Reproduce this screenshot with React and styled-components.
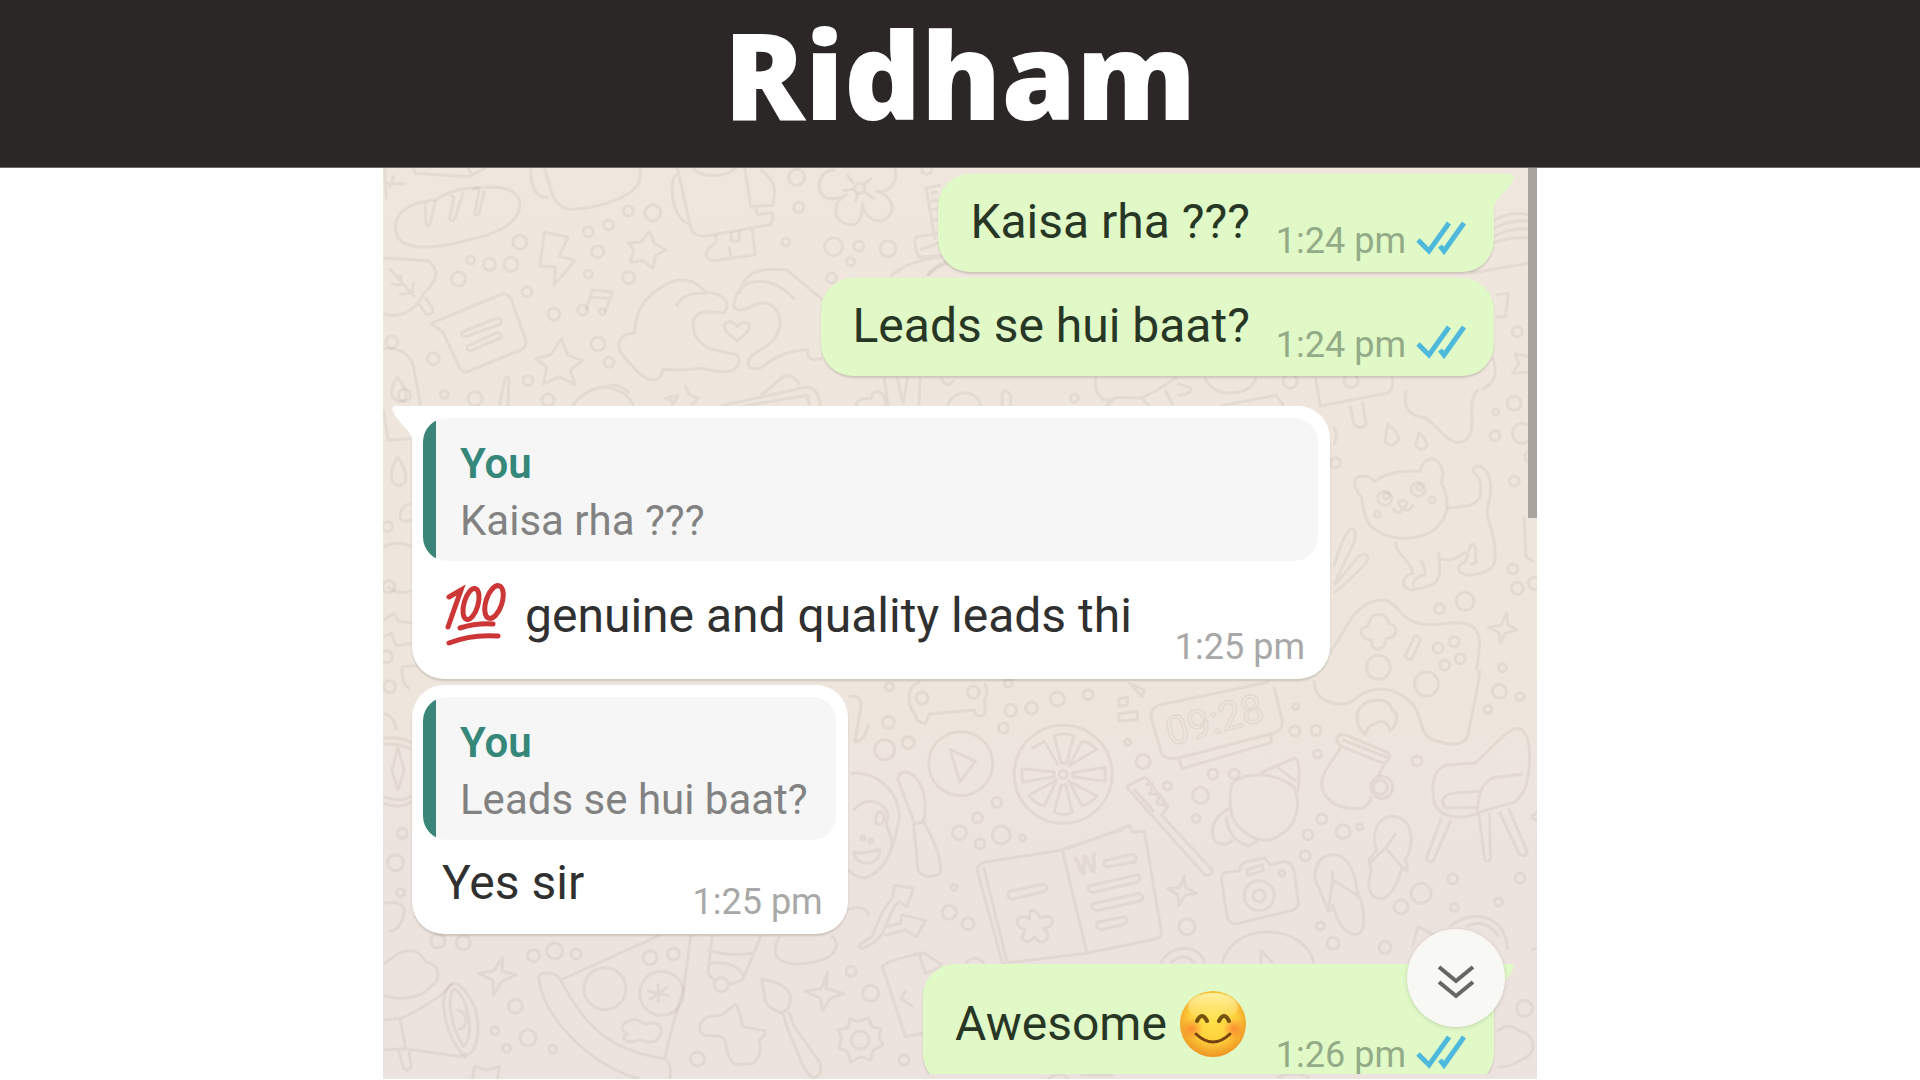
import styled, { createGlobalStyle } from "styled-components";

const messages = [
    { id: 1, mine: true, tail: true, text: "Kaisa rha ???", time: "1:24 pm" },
    { id: 2, mine: true, text: "Leads se hui baat?", time: "1:24 pm" },
    { id: 3, tail: true, quote: "Kaisa rha ???", emojiBefore: "hundred", text: "genuine and quality leads thi", time: "1:25 pm" },
    { id: 4, quote: "Leads se hui baat?", text: "Yes sir", time: "1:25 pm" },
    { id: 5, mine: true, tail: true, text: "Awesome", emojiAfter: "smile", time: "1:26 pm" }
];

export default function App() {
    return (
        <Page>
            <GlobalStyle />
            <Header>
                <Title>Ridham</Title>
            </Header>
            <Chat>
                <Wallpaper />
                <Messages>
                    {messages.map(message => <Message key={message.id} {...message} />)}
                </Messages>
                <ScrollThumb />
                <ScrollButton type="button" aria-label="Scroll to latest message">
                    <svg width="40" height="46" viewBox="0 0 40 46" fill="none" stroke="#666" strokeWidth="4">
                        <path d="M3 12L20 26L37 12M3 27L20 41L37 27" />
                    </svg>
                </ScrollButton>
            </Chat>
        </Page>
    );
}

function Message({ mine, tail, quote, emojiBefore, emojiAfter, text, time }) {
    return (
        <Bubble $mine={mine} $tail={tail}>
            {tail && <Tail mine={mine} />}
            {quote && (
                <Quote>
                    <QuoteAuthor>You</QuoteAuthor>
                    <QuoteText>{quote}</QuoteText>
                </Quote>
            )}
            <Body $mine={mine} $quoted={Boolean(quote)}>
                <Text $mine={mine}>
                    {emojiBefore && <Emoji name={emojiBefore} />}
                    <span>{text}</span>
                    {emojiAfter && <Emoji name={emojiAfter} />}
                </Text>
                <Meta $mine={mine}>
                    <time>{time}</time>
                    {mine && <Ticks />}
                </Meta>
            </Body>
        </Bubble>
    );
}

function Tail({ mine }) {
    return (
        <TailSvg $mine={mine} width="24" height="34" viewBox="0 0 24 34" aria-hidden="true">
            <path
                d="M0 0H20Q25 0 23 5L21 10L7 26Q4 30 4 34H0Z"
                transform={mine ? undefined : "matrix(-1 0 0 1 24 0)"}
                fill={mine ? "#e0f9c7" : "#fff"}
            />
        </TailSvg>
    );
}

function Ticks() {
    return (
        <svg width="50" height="42" viewBox="0 0 50 42" fill="none" stroke="#4fb9dc" strokeWidth="5" role="img" aria-label="Read">
            <path d="M2 20L13 31L33 3M24 26L28 31L48 3" />
        </svg>
    );
}

function Emoji({ name }) {
    if (name === "hundred") {
        return (
            <EmojiSvg viewBox="0 0 68 68" fill="none" stroke="#cc3636" strokeWidth="5" strokeLinecap="round" role="img" aria-label="100 points">
                <path d="M7 15L19 8L6 45" />
                <ellipse cx="29" cy="22" rx="7" ry="16" transform="rotate(16 29 22)" />
                <ellipse cx="52" cy="20" rx="8" ry="17" transform="rotate(18 52 20)" />
                <path d="M18 46Q34 41 51 42M7 61Q29 52 56 54" />
            </EmojiSvg>
        );
    }

    return (
        <EmojiSvg viewBox="0 0 68 68" fill="none" role="img" aria-label="Smiling face">
            <defs>
                <radialGradient id="face" cx="50%" cy="42%" r="58%">
                    <stop offset="0" stopColor="#ffe24a" />
                    <stop offset="0.6" stopColor="#fdd03c" />
                    <stop offset="1" stopColor="#ee9423" />
                </radialGradient>
                <linearGradient id="shine" x1="0" y1="0" x2="0" y2="1">
                    <stop offset="0" stopColor="#fff3a6" stopOpacity="0.95" />
                    <stop offset="1" stopColor="#fff3a6" stopOpacity="0" />
                </linearGradient>
                <radialGradient id="cheek">
                    <stop offset="0" stopColor="#f9762e" stopOpacity="0.75" />
                    <stop offset="1" stopColor="#f9762e" stopOpacity="0" />
                </radialGradient>
            </defs>
            <circle cx="34" cy="34" r="33" fill="url(#face)" />
            <ellipse cx="34" cy="17" rx="25" ry="14" fill="url(#shine)" />
            <circle cx="13" cy="39" r="11" fill="url(#cheek)" />
            <circle cx="55" cy="39" r="11" fill="url(#cheek)" />
            <path d="M18 31Q23 21 28 31M40 31Q45 21 50 31" stroke="#76520f" strokeWidth="4" strokeLinecap="round" />
            <path d="M17 44Q34 60 51 44" stroke="#76420f" strokeWidth="3" strokeLinecap="round" />
        </EmojiSvg>
    );
}

// One patch of the wallpaper: doodles in its own units, dots as [x, y, radius]
function Patch({ x, y, sx, dots, children }) {
    const sy = 1 / 3;
    return (
        <>
            <g transform={`translate(${x} ${y}) scale(${sx} ${sy})`}>{children}</g>
            {dots.map(([cx, cy, r]) => (
                <circle key={`${cx}-${cy}-${r}`} cx={x + cx * sx} cy={y + cy * sy} r={r} />
            ))}
        </>
    );
}

function Wallpaper() {
    return (
        <WallpaperSvg viewBox="0 0 1154 911" preserveAspectRatio="xMidYMin slice" aria-hidden="true">
            <Patch x={-3} y={-8} sx={0.37} dots={[
                [378, 247, 7], [296, 313, 6], [354, 313, 7], [245, 300, 4], [212, 357, 7], [397, 395, 5],
                [563, 215, 5], [618, 195, 5], [671, 153, 5], [737, 158, 8], [588, 275, 6], [563, 342, 4],
                [672, 353, 6], [470, 462, 6], [589, 552, 7], [619, 607, 5], [144, 596, 6], [400, 662, 5],
                [174, 703, 4], [257, 716, 7], [454, 720, 6], [1126, 52, 8], [1132, 142, 5], [1097, 246, 4],
                [1226, 260, 9], [1294, 258, 5], [1373, 266, 8], [1272, 305, 4], [1220, 354, 5], [1478, 28, 5],
                [1296, 85, 5], [32, 546, 6], [548, 450, 5], [600, 455, 3]
            ]}>
                <path d="M90 24L96 40L240 50L285 24M238 24L250 48M14 24Q14 110 20 116M16 70L68 72M24 84L38 46" />
                <path d="M42 200C42 140 110 124 150 120C190 88 250 80 300 82C360 80 380 110 378 140C370 200 300 225 240 240C170 260 40 290 42 200Z" />
                <path d="M122 128L124 190Q126 202 134 196L150 122M190 108Q204 108 198 120L188 178Q196 188 202 176L226 96M250 90Q266 78 268 92L256 160Q262 172 268 160L282 92" />
                <path d="M408 24C406 70 416 116 456 112M444 24L466 104Q484 152 530 148C600 140 690 110 702 60L704 24" />
                <path d="M806 40C776 50 788 176 832 190M804 24L840 204Q846 230 880 228L1054 194Q1062 186 1062 160M1028 28C1056 50 1070 80 1066 104L1062 136L1002 140L986 24M1014 140L1020 164L1062 158M846 24C870 54 930 54 962 24" />
                <path d="M906 224C916 256 896 252 888 266Q870 300 904 302L1014 284L1006 208M950 216L948 244L972 242L970 212M944 258L948 290" />
                <path d="M1230 30C1186 30 1178 80 1196 104C1214 128 1256 110 1260 104C1220 130 1224 180 1260 192C1296 204 1304 168 1304 130C1310 180 1350 194 1372 172C1396 146 1382 106 1342 94C1388 102 1400 50 1390 24M1280 70L1262 44M1308 74L1328 54M1280 88L1250 92M1292 98L1284 128M1310 96L1336 116" />
                <path d="M444 216L508 232L484 288L526 302L470 376L474 322L432 318Z" />
                <path d="M728 214L742 250L772 270L744 288L738 324L710 302L676 306L686 270L672 248L706 246Z" />
                <path d="M490 536L508 586L548 602L514 630L528 674L484 650L442 672L450 620L420 596L462 584Z" />
                <path d="M824 676L836 704L860 714L842 738M790 738L790 722L772 714L806 706Z" />
                <path d="M10 294L130 302C160 330 162 350 118 402C90 460 50 476 10 462M24 324L94 410M56 344L58 376L30 372M90 366L88 400L52 402M100 424L124 462Q146 468 142 446L122 412" />
                <path d="M138 490L330 402Q350 400 356 424L394 540Q398 562 376 572L234 636Q220 636 212 616L170 516Z" />
                <path d="M222 516L318 474Q334 476 326 492L232 530Q216 530 222 516ZM236 558L318 518Q334 522 326 534L246 572Q232 572 236 558Z" />
                <path d="M556 452L574 390L628 396L608 458M566 410L620 416" />
                <path d="M690 520C640 520 636 560 660 590C690 630 720 670 750 658C770 640 760 622 770 628C840 638 860 614 900 632C980 650 980 590 960 582C900 574 846 560 846 490C850 440 900 460 930 458C950 430 930 400 880 396C850 356 810 350 770 374C720 410 690 440 688 520M800 438C820 400 850 396 882 402" />
                <path d="M972 402C980 340 1020 320 1100 330L1196 420M956 440C960 380 1000 350 1060 370Q1100 390 1122 420M956 440C980 470 1010 420 1050 430C1100 460 1090 540 1020 574C980 600 990 640 1030 622C1060 600 1080 576 1156 568Q1150 610 1196 594" />
                <path d="M966 542C940 520 920 506 936 488Q954 480 966 500Q980 482 998 492Q1004 510 966 542Z" />
                <path d="M10 566C70 560 90 600 94 640L110 738M46 650Q76 690 70 716Q50 738 32 706Q28 686 46 650M322 738L338 656Q350 640 348 668L346 738" />
                <path d="M520 738C550 690 600 670 640 690Q670 700 686 738M600 686Q640 660 674 700M920 738L1150 682Q1184 678 1190 738M980 738L1154 706L1160 738M1030 706L1092 648Q1116 640 1134 674" />
                <path d="M1516 76L1476 84L1500 240M1488 100L1506 96M1488 124L1510 120M1490 150L1512 146M1494 180L1512 176M1516 218L1450 230Q1438 240 1456 292L1520 286M1380 348Q1430 300 1520 290M1480 348Q1490 320 1540 300" />
                <path d="M1286 738Q1290 710 1330 716M1330 716C1320 690 1370 680 1366 738M1362 652L1374 738M1398 652L1414 730L1426 652M1460 652L1456 738M1516 652Q1530 690 1550 660" />
            </Patch>

            <Patch x={537} y={-8} sx={0.3955} dots={[
                [1510, 515, 5], [390, 715, 4], [1090, 662, 7], [936, 664, 7]
            ]}>
                <path d="M1452 180Q1500 150 1538 164M1452 204Q1500 176 1538 184M1450 230Q1500 200 1538 208M1446 250Q1490 230 1538 234M1390 340L1538 310M0 270Q30 260 60 240M20 348Q40 320 70 310" />
                <path d="M1456 406L1488 400L1480 470L1456 470M1504 580L1538 590M1504 580L1514 610L1498 640L1538 636M1446 590C1470 650 1440 680 1420 688" />
                <path d="M70 738C80 690 140 680 154 738M208 738L208 700Q218 680 230 710L228 738M444 652C440 700 460 740 496 712L560 714L580 738M496 712L470 738M560 714L600 690L650 652M620 690L640 738M650 670L684 684Q690 704 650 706" />
                <path d="M720 652C740 720 840 710 850 652M760 738L900 706L920 738M1000 652L1012 738L1180 700Q1200 690 1194 652" />
            </Patch>

            <Patch x={-3} y={222} sx={0.37} dots={[
                [24, 590, 6], [18, 800, 6], [20, 410, 5], [66, 16, 6]
            ]}>
                <path d="M10 60L22 150L88 146M48 200Q76 250 68 276Q48 300 32 270Q26 240 48 200M84 340Q50 350 56 388Q70 400 86 388" />
                <path d="M10 470Q50 450 86 470M20 590Q60 620 84 600M10 690L38 670L50 694L86 698M10 740L30 730L44 768L86 760M60 830Q56 880 80 896M60 830L110 826" />
            </Patch>

            <Patch x={577} y={222} sx={0.37} dots={[
                [1498, 40, 7], [1448, 66, 3], [1446, 137, 5], [1520, 130, 10], [1540, 200, 5], [1498, 273, 5],
                [1494, 537, 5], [1506, 595, 6], [1552, 580, 6], [1296, 656, 5], [1365, 634, 9], [1466, 833, 4],
                [1292, 774, 5], [1336, 755, 5], [1352, 806, 5], [1310, 825, 5], [1131, 832, 12],
                [1148, 325, 7], [1238, 298, 7], [1128, 373, 3], [1152, 318, 3], [1242, 292, 3], [1276, 330, 3], [1014, 218, 5]
            ]}>
                <path d="M1054 48L1064 100Q1080 124 1098 104L1088 36M1206 0C1194 60 1220 80 1260 84C1300 120 1310 150 1346 158C1384 154 1384 110 1384 80C1380 40 1384 20 1400 0" />
                <path d="M1156 102Q1186 130 1186 150Q1168 176 1148 156ZM1240 128Q1264 150 1262 170Q1244 188 1232 164ZM1010 110Q1024 140 1010 164" />
                <path d="M1120 274C1150 250 1200 240 1244 244C1250 200 1290 190 1304 240Q1308 260 1300 276C1320 320 1326 370 1290 410C1250 460 1120 460 1096 380Q1086 340 1086 322C1060 290 1060 260 1086 258Q1110 258 1120 274Z" />
                <path d="M1188 334Q1200 326 1208 338Q1206 352 1196 354Q1180 340 1188 334M1170 354Q1184 380 1198 356Q1210 370 1226 344" />
                <path d="M1316 356C1350 346 1390 356 1406 320C1412 280 1404 260 1390 250C1380 230 1400 220 1416 236C1440 260 1438 310 1424 360C1424 400 1444 420 1446 480L1446 510C1440 550 1400 550 1376 556C1340 550 1340 524 1366 516L1378 470Q1388 450 1394 480L1394 510Q1400 520 1378 522" />
                <path d="M1176 454C1180 500 1220 510 1224 550C1190 560 1190 596 1220 600C1240 596 1280 590 1290 570C1304 540 1292 510 1294 486M1246 510Q1264 550 1254 556Q1226 560 1224 590M1296 506C1330 516 1350 500 1366 486" />
                <path d="M1010 530Q1040 420 1058 416Q1076 420 1064 460L1010 584M1014 584L1076 500Q1096 486 1102 500Q1110 516 1010 610" />
                <path d="M1000 790L1060 680Q1100 626 1150 630C1200 650 1180 706 1290 704C1360 690 1400 700 1404 750C1404 790 1398 820 1396 844" />
                <path d="M1110 686C1120 666 1160 670 1158 700C1190 706 1180 750 1152 744C1150 786 1110 790 1112 750C1080 750 1074 706 1100 712Q1104 700 1110 686Z" />
                <path d="M1228 740Q1240 734 1244 750L1222 806Q1206 814 1204 796ZM1478 668L1480 704L1506 720L1474 730L1460 758L1456 726L1428 712L1462 706Z" />
                <path d="M1524 380L1530 500L1552 516" />
            </Patch>

            <Patch x={-3} y={502} sx={0.37} dots={[
                [26, 50, 6], [60, 490, 5], [42, 578, 8], [56, 668, 4], [156, 813, 7], [225, 818, 7], [415, 857, 6],
                [472, 843, 8], [530, 852, 5], [730, 863, 7], [793, 852, 6], [366, 1009, 7], [310, 1082, 4],
                [400, 1103, 8], [342, 1135, 4], [467, 1137, 4], [858, 1167, 7], [1273, 904, 5], [1326, 970, 8],
                [1416, 1170, 5], [1377, 50, 4], [1374, 157, 6], [1364, 239, 10],
                [1298, 1110, 9], [922, 944, 7], [608, 956, 21], [761, 970, 22], [1305, 504, 2], [1326, 512, 2]
            ]}>
                <path d="M10 204Q60 200 88 220M10 222Q60 220 88 240M10 400Q60 420 88 392M10 380Q60 400 88 376M48 234L66 300L48 360L32 300ZM10 130Q40 140 44 180M10 700Q60 690 66 720Q60 780 24 784" />
                <path d="M10 880C30 870 50 840 80 842C110 840 120 870 124 876C160 880 170 930 136 950C110 990 40 990 10 976" />
                <path d="M10 1050L60 1044Q160 990 196 940M54 1046L70 1138M10 1140L64 1136L234 1162M50 1140L64 1196Q80 1210 84 1186L78 1138" />
                <path d="M200 940C160 950 160 1060 220 1150C270 1180 280 1030 240 980Q216 936 200 940ZM200 956C180 980 190 1070 226 1130C256 1100 240 980 200 956M206 1020C240 1020 240 1080 212 1076" />
                <path d="M332 862L330 904L368 914L330 934L306 976L306 932L268 910L308 902Z" />
                <path d="M428 920C440 900 480 910 488 930C540 1040 600 1140 770 1166Q790 1180 784 1227M428 920C440 1040 560 1180 700 1227M488 930L756 796M840 796L820 960Q790 1060 770 1166" />
                <path d="M752 940L752 998M722 962L784 978M728 990L778 950M668 1056C700 1036 700 1060 720 1062C760 1050 770 1080 750 1108C730 1130 700 1100 690 1114C660 1120 650 1100 668 1092Q640 1070 668 1056Z" />
                <path d="M898 796L886 910L902 930M1030 796L980 930L944 944M886 840Q940 860 1010 850M890 880Q960 870 984 920M1080 800C1050 860 1080 890 1150 880C1230 870 1250 830 1220 796" />
                <path d="M960 1002L926 1034L890 1040C860 1050 856 1090 880 1096C910 1100 930 1090 934 1120Q940 1170 960 1184L1010 1180Q1036 1150 1024 1110Q1044 1096 1040 1082L980 1070Q970 1010 960 1002Z" />
                <path d="M1032 928Q1100 940 1110 980Q1110 1020 1084 1028Q1040 1010 1040 980ZM1088 1030L1110 1100C1140 1170 1140 1200 1170 1224Q1196 1220 1190 1180L1120 1070L1104 1024" />
                <path d="M1210 908L1206 956L1254 970L1216 986L1196 1022L1190 984L1150 964L1192 956Z" />
                <path d="M1270 1046L1290 1054L1320 1044L1330 1070L1354 1076L1348 1104L1360 1124L1334 1140L1326 1170L1300 1160L1272 1176L1262 1144L1240 1134L1248 1104L1238 1080L1264 1074Z" />
                <path d="M1468 1090L1420 1100L1358 890Q1370 870 1470 848L1520 886M1458 856L1474 910L1518 890M1422 960L1408 986L1442 1010" />
                <path d="M250 1227L256 1190L290 1200L322 1190L318 1227" />
                <path d="M1268 80Q1300 70 1300 110L1284 210M1320 160Q1310 220 1280 214M1270 310C1340 300 1400 360 1404 440C1390 540 1360 610 1310 624Q1280 620 1266 600M1280 420C1320 370 1370 400 1374 440C1360 470 1380 480 1384 520Q1380 560 1350 600M1340 440Q1350 410 1364 440Q1360 470 1340 460ZM1280 546C1310 556 1330 540 1350 540Q1350 580 1310 580Q1280 570 1280 546" />
                <path d="M1400 330Q1400 300 1430 308C1470 330 1480 400 1470 450Q1460 464 1444 458ZM1442 460L1454 600Q1470 630 1510 614Q1530 580 1470 456" />
                <path d="M1390 646L1442 654L1424 710L1402 694C1360 740 1380 810 1300 836Q1280 830 1330 800C1350 740 1370 700 1386 682ZM1366 770L1408 760L1410 734L1474 752L1450 800L1420 780L1364 796M1258 720Q1320 700 1320 740" />
            </Patch>

            <Patch x={517} y={502} sx={0.41} dots={[
                [54, 84, 6], [179, 67, 6], [384, 87, 7], [321, 114, 6], [270, 121, 6], [252, 174, 5], [459, 74, 5],
                [264, 40, 4], [20, 218, 6], [148, 281, 32], [398, 313, 49], [398, 313, 4], [555, 217, 3], [593, 275, 7],
                [236, 397, 5], [189, 443, 5], [145, 488, 7], [247, 495, 9], [299, 504, 3], [195, 521, 5], [120, 727, 7],
                [166, 761, 6], [132, 652, 3], [733, 376, 8], [722, 445, 4], [763, 312, 5], [815, 312, 5], [700, 770, 8],
                [963, 183, 5], [1015, 181, 5], [965, 110, 3], [1018, 252, 4], [1261, 273, 5], [1029, 447, 5], [995, 494, 5],
                [1081, 485, 7], [1121, 471, 3], [988, 557, 5], [1348, 627, 5], [1271, 670, 10], [1222, 710, 7],
                [1352, 712, 4], [1460, 696, 4], [1512, 624, 5], [1025, 768, 4], [1056, 820, 6], [1183, 832, 6],
                [876, 677, 15], [876, 677, 6], [931, 610, 3], [1284, 42, 12], [1462, 64, 7], [1512, 80, 4], [1434, 118, 4],
                [1523, 1015, 8], [1175, 352, 11], [1172, 352, 7], [652, 348, 4]
            ]}>
                <path d="M50 34C10 50 20 110 36 130Q40 160 62 160L72 132L180 120L186 136Q208 144 208 120L206 90Q220 60 204 40" />
                <path d="M122 238L184 274L146 336Z" />
                <path d="M376 198Q400 184 424 198L406 280L394 280ZM320 236L352 214L386 286M298 296Q296 320 300 336L376 320L376 306ZM314 376L382 330L352 408Q326 400 314 376ZM376 426L394 344L404 344L420 426Q400 442 376 426ZM444 408L412 334L480 378Q466 400 444 408ZM500 292L420 308L422 320L500 334ZM480 238Q464 218 444 214L412 288Z" />
                <path d="M534 86L556 82L554 106L534 108ZM534 132L578 124L580 148L534 154ZM560 40L596 60L590 80Z" />
                <path d="M900 36L630 106Q606 120 614 150L638 250Q646 270 680 264L910 190Q936 180 932 150L912 50M680 268L688 296L904 218Q910 200 896 192" />
                <path d="M1010 30C1010 100 1070 110 1100 96C1150 40 1200 50 1240 90C1280 130 1260 190 1300 210C1340 226 1370 230 1384 200C1400 100 1410 60 1414 0" />
                <path d="M1134 194C1100 150 1110 90 1170 90C1210 100 1190 120 1210 130Q1216 160 1196 182Q1184 140 1156 162Q1140 170 1134 194ZM1066 204Q1070 190 1090 196L1190 248Q1200 270 1180 280L1078 230Q1064 220 1066 204ZM1076 230C1060 270 1020 310 1030 360C1050 410 1090 420 1130 414Q1146 400 1150 380M1182 280L1166 318M1080 210L1188 262" />
                <path d="M1500 176C1530 170 1536 220 1536 270C1530 340 1530 360 1500 396L1420 424C1380 450 1320 450 1304 400C1294 350 1300 300 1330 286L1404 278C1440 240 1470 190 1500 176ZM1408 430C1410 370 1420 340 1444 324L1520 312M1330 414Q1310 380 1350 370L1412 364M1330 414L1410 412" />
                <path d="M1320 446L1284 564Q1284 580 1300 574L1344 450M1412 434L1426 568Q1434 580 1440 566L1438 430M1462 426L1510 552Q1526 564 1530 546L1484 414" />
                <path d="M552 350L590 326Q604 320 608 336L654 410L638 436L762 600Q760 618 744 616L552 350M598 344L616 342L610 372L634 374L626 400L654 408M570 356L620 426" />
                <path d="M810 340C850 300 920 310 960 350C980 400 970 470 920 500C880 530 830 490 810 440Q800 380 810 340ZM880 308L964 264Q980 280 970 366M918 290L966 334M810 412C770 430 750 480 770 516C800 530 800 520 812 510M796 440Q800 510 850 528L872 514" />
                <path d="M188 600Q190 580 210 576L396 540Q470 510 560 466L566 486L596 484L638 790Q640 800 620 808L454 850L250 880L188 600ZM204 592L262 880M396 542L456 850M400 536L544 478" />
                <path d="M266 664L350 642Q364 650 354 664L272 688Q258 680 266 664ZM498 572L568 552Q582 560 572 576L506 590Q494 588 498 572ZM460 648L580 614Q590 626 580 636L470 668Q456 664 460 648ZM468 702L584 670Q598 680 588 692L480 722Q466 718 468 702ZM482 756L548 740Q560 750 548 762L490 780Q474 774 482 756Z" />
                <path d="M320 720Q340 724 340 744Q372 730 372 756Q370 772 350 776Q372 800 350 816Q334 816 328 800Q310 826 298 806Q300 786 306 780Q276 766 290 742Q304 736 316 748Q314 726 320 720Z" />
                <path d="M694 618L696 652L724 670L696 676L680 706L678 674L652 656L682 652Z" />
                <path d="M784 626Q784 606 804 606L828 602Q830 576 850 574L890 564L902 584L940 574Q960 580 962 610L972 700Q972 720 940 726L820 762Q800 764 796 730ZM846 600L884 584L886 602L848 616Z" />
                <path d="M1052 554C1010 560 1006 620 1020 650L1044 722Q1060 720 1056 706C1070 780 1100 800 1120 790C1140 770 1130 700 1116 670C1110 600 1090 550 1052 554ZM1044 718L1056 630L1120 680M1056 650L1054 600M1192 440C1160 450 1150 500 1162 540L1144 570Q1146 590 1150 600C1134 660 1150 690 1180 686C1210 660 1216 620 1226 590L1236 604Q1240 590 1232 570C1260 520 1250 430 1192 440ZM1144 582L1184 534L1232 602M1184 534L1210 490" />
                <path d="M786 880C810 750 990 760 1010 880M880 840L880 880M880 840L910 880M636 880C660 820 730 820 744 880M660 880Q690 840 720 880M160 880Q180 850 206 880" />
                <path d="M1250 830L1264 770L1310 800M1340 770C1400 710 1480 740 1482 840M1380 770Q1430 740 1460 800M1540 840L1561 830M1456 1084C1480 1060 1500 1070 1510 1084C1550 1090 1556 1150 1520 1166Q1480 1196 1456 1190M1540 440L1561 420M1540 440L1561 460" />
                <path d="M360 1227Q390 1200 410 1227M440 1215L520 1215M920 1222Q960 1200 1000 1222" />
            </Patch>

            <WallpaperText x="0" y="0" transform="translate(787 578) rotate(-15)" fontSize="40">09:28</WallpaperText>
            <WallpaperText x="0" y="0" transform="translate(694 708) rotate(-12)" fontSize="26">W</WallpaperText>
        </WallpaperSvg>
    );
}

const GlobalStyle = createGlobalStyle`
    * {
        box-sizing: border-box;
    }

    body {
        margin: 0;
        background-color: #fff;
        font-family: Roboto, "Liberation Sans", sans-serif;
    }
`;

const Page = styled.div`
    height: 100vh;
    display: flex;
    flex-direction: column;
    align-items: center;
`;

const Header = styled.header`
    width: 100%;
    flex-shrink: 0;
    padding-bottom: 19px;
    background-color: #2b2727;
    border-bottom: 1px solid #6e6864;
`;

const Title = styled.h1`
    margin: 0;
    font-family: "Open Sans", sans-serif;
    font-size: 120px;
    font-weight: 800;
    line-height: 148px;
    text-align: center;
    color: #fff;
`;

const Chat = styled.main`
    width: 100%;
    max-width: 1154px;
    flex: 1;
    min-height: 0;
    margin-bottom: 1px;
    display: flex;
    flex-direction: column;
    position: relative;
    overflow: hidden;
    background: linear-gradient(#efe7de 0%, #eee6dd 55%, #ede3de 75%, #ede3de 100%);
`;

const WallpaperSvg = styled.svg`
    width: 100%;
    height: 100%;
    position: absolute;
    inset: 0;
    fill: none;
    stroke: rgba(90, 70, 60, 0.07);
    stroke-width: 3;
    stroke-linejoin: round;

    path {
        vector-effect: non-scaling-stroke;
    }
`;

const WallpaperText = styled.text`
    font-family: Roboto, sans-serif;
    stroke-width: 2;
`;

const Messages = styled.section`
    flex: 1;
    min-height: 0;
    margin-bottom: 5px;
    padding: 6px 43px 0 29px;
    display: flex;
    flex-direction: column;
    position: relative;
    overflow: hidden;
`;

const Bubble = styled.article`
    flex-shrink: 0;
    align-self: ${props => props.$mine ? "flex-end" : "flex-start"};
    position: relative;
    border-radius: 32px;
    border-top-right-radius: ${props => props.$mine && props.$tail ? "0" : "32px"};
    border-top-left-radius: ${props => !props.$mine && props.$tail ? "0" : "32px"};
    background-color: ${props => props.$mine ? "#e0f9c7" : "#fff"};
    box-shadow: 0 2px 2px rgba(80, 70, 60, 0.2);

    &:not(:first-child) {
        margin-top: ${props => props.$tail ? "30px" : "6px"};
    }
`;

const TailSvg = styled.svg`
    position: absolute;
    top: 0;
    ${props => props.$mine ? "right: -20px;" : "left: -20px;"}
`;

const Quote = styled.blockquote`
    margin: 12px 12px 0 11px;
    padding: 17px 28px 12px 37px;
    border-radius: 24px;
    background: linear-gradient(to right, #3a8577 13px, #f6f6f6 13px);
    font-size: 42px;
    line-height: 57px;
`;

const QuoteAuthor = styled.div`
    font-weight: 600;
    color: #35877a;
`;

const QuoteText = styled.div`
    color: #828282;
`;

const Body = styled.div`
    padding: ${props => props.$quoted ? "15px 25px 11px 30px" : "20px 28px 10px 32px"};
    display: flex;
    justify-content: space-between;
    gap: ${props => props.$mine ? "26px" : "43px"};
`;

const Text = styled.div`
    padding-bottom: 12px;
    display: flex;
    align-items: center;
    gap: 12px;
    font-size: 48px;
    line-height: 56px;
    white-space: nowrap;
    color: ${props => props.$mine ? "#283725" : "#303030"};
`;

const EmojiSvg = styled.svg`
    width: 68px;
    height: 68px;
    margin: 6px 3px 6px 0;
`;

const Meta = styled.div`
    align-self: flex-end;
    display: flex;
    gap: 10px;
    font-size: 36px;
    line-height: 42px;
    white-space: nowrap;
    color: ${props => props.$mine ? "#93ab86" : "#a8a8a8"};
`;

const ScrollThumb = styled.div`
    width: 9px;
    height: 350px;
    position: absolute;
    top: 0;
    right: 0;
    background-color: #a9a49d;
`;

const ScrollButton = styled.button`
    width: 98px;
    height: 98px;
    padding: 0;
    display: flex;
    justify-content: center;
    align-items: center;
    position: absolute;
    right: 32px;
    bottom: 52px;
    border: none;
    border-radius: 50%;
    background-color: #f8f8f5;
    box-shadow: 0 1px 4px rgba(80, 70, 60, 0.2);
    cursor: pointer;
`;
